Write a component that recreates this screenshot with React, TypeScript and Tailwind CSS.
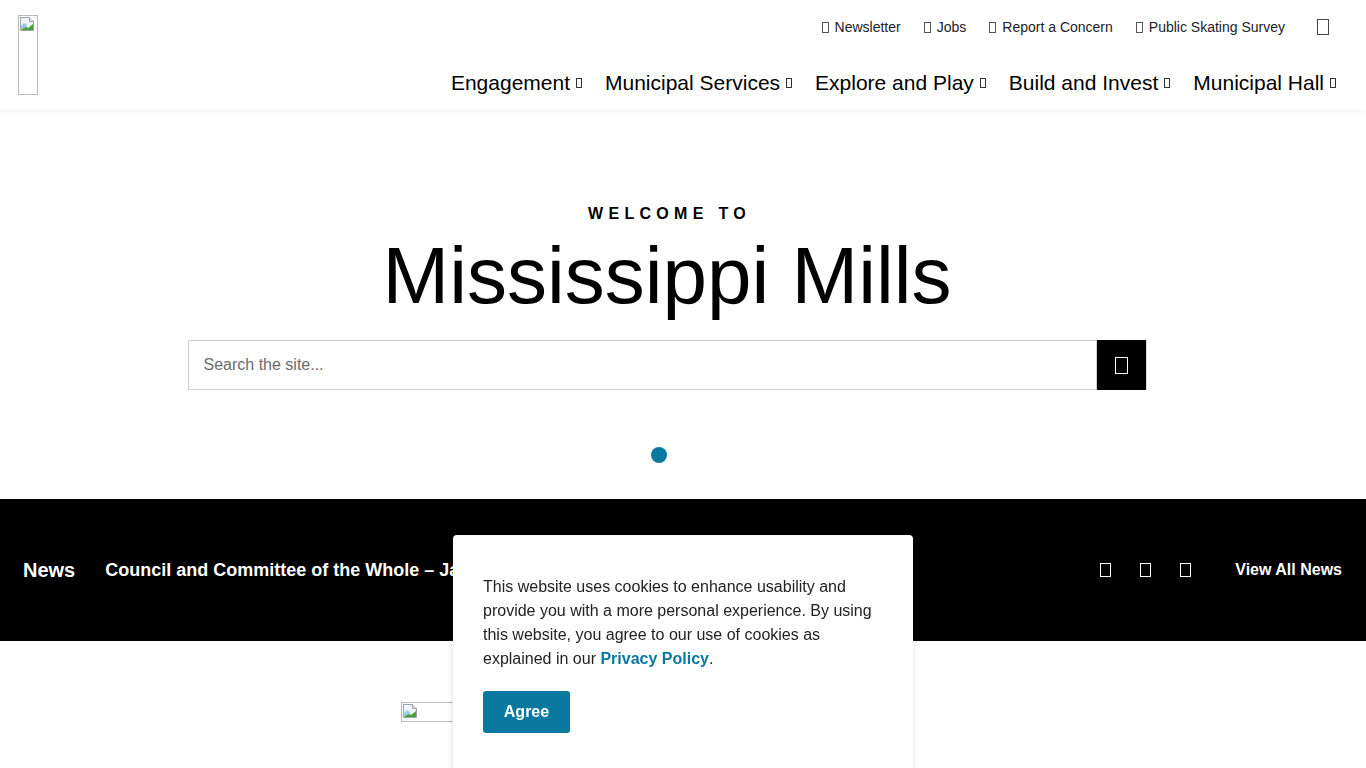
import React from 'react';

const Tofu = ({ className = '' }: { className?: string }) => (
  <span className={`inline-block border ${className}`} />
);

const BrokenImg = ({ className = '' }: { className?: string }) => (
  <div className={`border border-[#b9b9b9] ${className}`}>
    <svg width="16" height="16" viewBox="0 0 16 16" className="block">
      <path d="M1.5 1.5h9l4 4v9h-13z" fill="#f2f5f8" stroke="#9aa3ab" />
      <path d="M10.5 1.5v4h4" fill="#dfe5ea" stroke="#9aa3ab" />
      <path d="M2 14 L6 10 L9 12 L14 8 V14 Z" fill="#4aa33a" />
      <path d="M2 10 L5 7 L8 9 V11 L2 13 Z" fill="#9cc7e8" />
    </svg>
  </div>
);

const topLinks = ['Newsletter', 'Jobs', 'Report a Concern', 'Public Skating Survey'];
const navItems = ['Engagement', 'Municipal Services', 'Explore and Play', 'Build and Invest', 'Municipal Hall'];

export default function App() {
  return (
    <div className="min-h-[768px] bg-white font-['Liberation_Sans',Arial,sans-serif] text-black overflow-hidden">
      <header className="h-[110px] flex justify-between pl-[18px] pr-[30px] shadow-[0_1px_6px_rgba(0,0,0,0.06)] relative z-10">
        <BrokenImg className="mt-[15px] w-[20px] h-[80px]" />
        <div className="flex flex-col items-end">
          <div className="flex items-center h-[26px] mt-[14px] text-[14px] text-[#222]">
            {topLinks.map((l) => (
              <a key={l} className="flex items-center mr-[23px]">
                <Tofu className="w-[7px] h-[11px] border-[#555] mr-[6px]" />
                {l}
              </a>
            ))}
            <Tofu className="w-[12px] h-[16px] border-[#444] ml-[9px] mr-[7px]" />
          </div>
          <nav className="flex items-center mt-[27px] text-[21px]">
            {navItems.map((n, i) => (
              <a key={n} className={`flex items-center ${i < navItems.length - 1 ? 'mr-[23px]' : ''}`}>
                {n}
                <Tofu className="w-[6px] h-[10px] border-[#333] ml-[6px]" />
              </a>
            ))}
          </nav>
        </div>
      </header>

      <section className="h-[389px] flex flex-col items-center pr-[32px]">
        <div className="mt-[96px] text-[16px] font-bold tracking-[5.3px] pl-[5px] leading-[16px]">WELCOME TO</div>
        <h1 className="mt-[14px] text-[80px] leading-[80px] font-normal">Mississippi Mills</h1>
        <div className="mt-[24px] flex w-[959px] h-[50px]">
          <div className="flex-1 border border-[#cfcfcf] flex items-center pl-[15px] text-[16px] text-[#6b6b6b]">
            Search the site...
          </div>
          <button className="w-[50px] h-[50px] bg-black flex items-center justify-center border-r border-[#ddd]">
            <Tofu className="w-[13px] h-[17px] border-white" />
          </button>
        </div>
        <div className="mt-[57px] mr-[16px] w-[16px] h-[16px] rounded-full bg-[#0b789f]" />
      </section>

      <section className="h-[142px] bg-black text-white flex items-center pl-[23px] pr-[24px]">
        <div className="text-[20px] font-bold">News</div>
        <div className="ml-[30px] text-[18px] font-bold flex-1 whitespace-nowrap overflow-hidden">
          Council and Committee of the Whole – January 2026 Meetings
        </div>
        <div className="flex items-center gap-[29px] ml-[40px]">
          <Tofu className="w-[11px] h-[14px] border-white" />
          <Tofu className="w-[11px] h-[14px] border-white" />
          <Tofu className="w-[11px] h-[14px] border-white" />
        </div>
        <div className="ml-[44px] text-[16px] font-bold">View All News</div>
      </section>

      <section className="pt-[61px] pl-[401px]">
        <BrokenImg className="w-[80px] h-[20px]" />
      </section>

      <div className="fixed left-[453px] top-[535px] w-[460px] h-[260px] bg-white rounded-[4px] shadow-[0_0_6px_rgba(0,0,0,0.12)] pt-[40px] px-[30px] z-20">
        <p className="text-[16px] leading-[24px] text-[#222] w-[400px]">
          This website uses cookies to enhance usability and provide you with a more personal experience. By using this website, you agree to our use of cookies as explained in our{' '}
          <a className="font-bold text-[#0b789f]">Privacy Policy</a>.
        </p>
        <button className="mt-[20px] w-[87px] h-[42px] bg-[#0b789f] text-white font-bold text-[16px] rounded-[3px]">
          Agree
        </button>
      </div>
    </div>
  );
}
